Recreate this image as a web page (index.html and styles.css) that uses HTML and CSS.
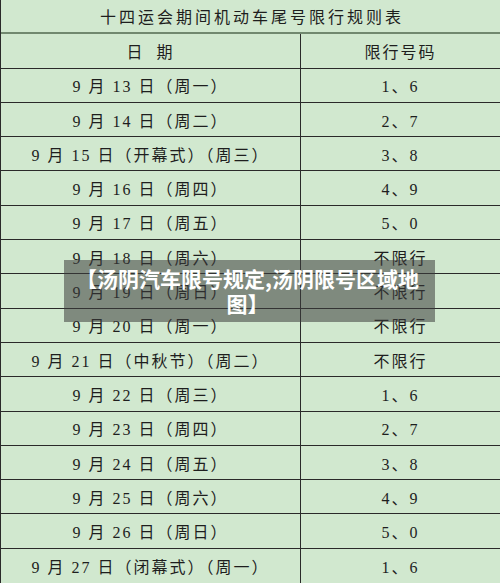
FILE: index.html
```html
<!DOCTYPE html>
<html lang="zh-CN">
<head>
<meta charset="utf-8">
<title>十四运会期间机动车尾号限行规则表</title>
<link rel="stylesheet" href="styles.css">
</head>
<body>
<div class="page">
  <div class="sheet">
    <div class="cell title">十四运会期间机动车尾号限行规则表</div>
    <div class="cell left head">日&nbsp;&nbsp;期</div>
    <div class="cell right head">限行号码</div>

    <div class="cell left">9 月 13 日（周一）</div><div class="cell right">1、6</div>
    <div class="cell left">9 月 14 日（周二）</div><div class="cell right">2、7</div>
    <div class="cell left">9 月 15 日（开幕式）（周三）</div><div class="cell right">3、8</div>
    <div class="cell left">9 月 16 日（周四）</div><div class="cell right">4、9</div>
    <div class="cell left">9 月 17 日（周五）</div><div class="cell right">5、0</div>
    <div class="cell left">9 月 18 日（周六）</div><div class="cell right">不限行</div>
    <div class="cell left">9 月 19 日（周日）</div><div class="cell right">不限行</div>
    <div class="cell left">9 月 20 日（周一）</div><div class="cell right">不限行</div>
    <div class="cell left">9 月 21 日（中秋节）（周二）</div><div class="cell right">不限行</div>
    <div class="cell left">9 月 22 日（周三）</div><div class="cell right">1、6</div>
    <div class="cell left">9 月 23 日（周四）</div><div class="cell right">2、7</div>
    <div class="cell left">9 月 24 日（周五）</div><div class="cell right">3、8</div>
    <div class="cell left">9 月 25 日（周六）</div><div class="cell right">4、9</div>
    <div class="cell left">9 月 26 日（周日）</div><div class="cell right">5、0</div>
    <div class="cell left last">9 月 27 日（闭幕式）（周一）</div><div class="cell right last">1、6</div>
  </div>
  <div class="caption">【汤阴汽车限号规定,汤阴限号区域地图】</div>
</div>
</body>
</html>
```

FILE: styles.css
```css
html, body {
  margin: 0;
  padding: 0;
  background: #d1e8cf;
  overflow: hidden;
}

.page {
  position: relative;
  width: 500px;
  height: 583px;
  overflow: hidden;
}

.sheet {
  box-sizing: border-box;
  width: 500px;
  border-left: 1px solid #2a2a2a;
  display: grid;
  grid-template-columns: 300px 199px;
  grid-template-rows: repeat(17, 34.3px);
  background: #d1e8cf;
  color: #1e1e1e;
  font-family: "Liberation Serif", "Noto Sans CJK SC", serif;
  font-size: 16px;
  letter-spacing: 2px;
}

.cell {
  box-sizing: border-box;
  display: flex;
  align-items: center;
  justify-content: center;
  white-space: nowrap;
  border-bottom: 1px solid #2a2a2a;
}

.title {
  grid-column: 1 / 3;
  border-bottom: 2px solid #71886f;
  letter-spacing: 3px;
  padding-left: 3px;
}

.left {
  border-right: 1px solid #2a2a2a;
}

.last {
  border-bottom: none;
}

.caption {
  position: absolute;
  left: 64px;
  top: 260px;
  width: 371px;
  height: 62px;
  box-sizing: border-box;
  padding: 6px 14px 6px 10px;
  background: rgba(60, 60, 60, 0.55);
  color: #ffffff;
  font-family: "Noto Sans CJK SC", sans-serif;
  font-weight: 700;
  font-size: 21px;
  line-height: 25px;
  text-align: center;
}
```
